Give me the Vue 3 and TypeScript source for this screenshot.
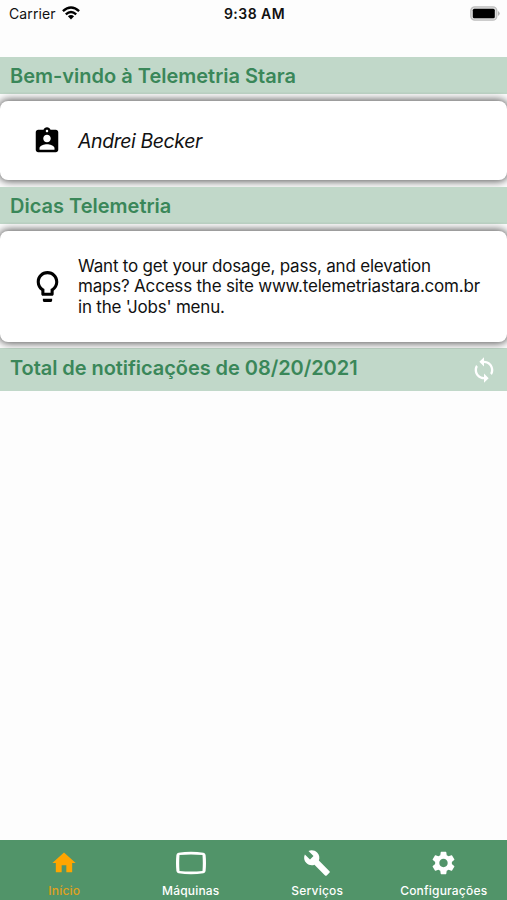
<script setup lang="ts">
interface Tab {
  label: string
  icon: string
  size: number
  active?: boolean
}

const tabs: Tab[] = [
  { label: 'Início', icon: 'M10 20v-6h4v6h5v-8h3L12 3 2 12h3v8z', size: 28, active: true },
  {
    label: 'Máquinas',
    icon: 'M2.5 1.800Q15 -.2 27.500 1.800Q29.300 2.100 29.600 4Q30.400 12 29.600 20Q29.300 21.900 27.500 22.200Q15 24.200 2.500 22.200Q.7 21.900 .4 20Q-.4 12 .4 4Q.7 2.100 2.500 1.800ZM3.500 3.900Q2.900 12 3.500 20.100Q15 21.100 26.500 20.100Q27.100 12 26.500 3.900Q15 2.900 3.500 3.900Z',
    size: 30,
  },
  {
    label: 'Serviços',
    icon: 'M22.700 19l-9.100-9.100c.9-2.300.4-5-1.500-6.900-2-2-5-2.400-7.400-1.300L9 6 6 9 1.600 4.700C.4 7.100.9 10.100 2.900 12.100c1.900 1.900 4.600 2.400 6.900 1.500l9.100 9.100c.4.4 1 .4 1.400 0l2.300-2.300c.5-.4.5-1.100.1-1.400z',
    size: 28,
  },
  {
    label: 'Configurações',
    icon: 'M19.140 12.940c.04-.3.06-.61.06-.94 0-.32-.02-.64-.07-.94l2.030-1.580c.18-.14.23-.41.12-.61l-1.920-3.320c-.12-.22-.37-.29-.59-.22l-2.390.96c-.5-.38-1.030-.7-1.620-.94l-.36-2.540c-.04-.24-.24-.41-.48-.41h-3.840c-.24 0-.43.17-.47.41l-.36 2.540c-.59.24-1.130.57-1.620.94l-2.390-.96c-.22-.08-.47 0-.59.22L2.740 8.870c-.12.21-.08.47.12.61l2.030 1.580c-.05.3-.09.63-.09.94s.02.64.07.94l-2.030 1.580c-.18.14-.23.41-.12.61l1.920 3.320c.12.22.37.29.59.22l2.390-.96c.5.38 1.030.7 1.620.94l.36 2.540c.05.24.24.41.48.41h3.840c.24 0 .44-.17.47-.41l.36-2.540c.59-.24 1.130-.56 1.620-.94l2.390.96c.22.08.47 0 .59-.22l1.920-3.320c.12-.22.07-.47-.12-.61l-2.010-1.580zM12 15.600c-2 0-3.600-1.600-3.600-3.600s1.600-3.600 3.600-3.600 3.600 1.600 3.600 3.600-1.600 3.600-3.600 3.600z',
    size: 29,
  },
]
</script>

<template>
  <div class="screen">
    <header class="status">
      <div class="carrier">
        <span>Carrier</span>
        <svg width="18" height="14" viewBox="0 0 18 14">
          <g fill="none" stroke="#000" stroke-width="2.400">
            <path d="M.9 5.200Q9-2 17.100 5.200" />
            <path d="M3.800 8.300Q9 3.700 14.200 8.300" />
          </g>
          <path d="M5.900 10.300Q9 7.600 12.100 10.300L9 13.600Z" />
        </svg>
      </div>
      <span class="clock">9:38 AM</span>
      <svg class="battery" width="30" height="15" viewBox="0 0 30 15">
        <rect x=".8" y=".8" width="26" height="13.400" rx="4" fill="#dedede" stroke="#bebebe" stroke-width="1.300" />
        <rect x="2.800" y="2.800" width="22" height="9.400" rx="1.500" />
        <path d="M28 5Q31.500 7.500 28 10Z" fill="#b4b4b4" />
      </svg>
    </header>

    <main class="content">
      <h2 class="bar welcome"><span>Bem-vindo à Telemetria Stara</span></h2>
      <section class="card user">
        <svg class="user-icon" viewBox="0 0 24 24">
          <path d="M19 3h-4.180C14.400 1.840 13.300 1 12 1c-1.300 0-2.400.84-2.820 2H5c-1.100 0-2 .9-2 2v14c0 1.100.9 2 2 2h14c1.100 0 2-.9 2-2V5c0-1.100-.9-2-2-2zm-7 0c.55 0 1 .45 1 1s-.45 1-1 1-1-.45-1-1 .45-1 1-1zm0 4c1.660 0 3 1.340 3 3s-1.340 3-3 3-3-1.340-3-3 1.340-3 3-3zm6 12H6v-1.400c0-2 4-3.100 6-3.100s6 1.100 6 3.100V19z" />
        </svg>
        <span class="name">Andrei Becker</span>
      </section>
      <h2 class="bar tips"><span>Dicas Telemetria</span></h2>
      <section class="card tip">
        <svg class="bulb-icon" viewBox="0 0 24 24">
          <path d="M9 21c0 .5.4 1 1 1h4c.6 0 1-.5 1-1v-1H9v1zm3-19C8.100 2 5 5.100 5 9c0 2.400 1.200 4.500 3 5.700V17c0 .5.4 1 1 1h6c.6 0 1-.5 1-1v-2.300c1.800-1.300 3-3.400 3-5.700 0-3.900-3.100-7-7-7zm2.900 11.100l-.9.6V16h-4v-2.300l-.8-.6C7.800 12.200 7 10.600 7 9c0-2.800 2.200-5 5-5s5 2.200 5 5c0 1.600-.8 3.200-2.100 4.100z" />
        </svg>
        <p class="tip-text">
          Want to get your dosage, pass, and elevation<br />
          maps? Access the site www.telemetriastara.com.br<br />
          in the 'Jobs' menu.
        </p>
      </section>
      <h2 class="bar total">
        <span>Total de notificações de 08/20/2021</span>
        <svg width="28" height="28" viewBox="0 0 24 24" fill="#fff">
          <path d="M12 4V1L8 5l4 4V6c3.310 0 6 2.690 6 6 0 1.010-.25 1.970-.7 2.800l1.460 1.460C19.540 15.030 20 13.570 20 12c0-4.420-3.580-8-8-8zm0 14c-3.310 0-6-2.690-6-6 0-1.010.25-1.970.7-2.800L5.240 7.740C4.460 8.970 4 10.430 4 12c0 4.420 3.580 8 8 8v3l4-4-4-4v3z" />
        </svg>
      </h2>
    </main>

    <nav class="tabs">
      <div v-for="tab in tabs" :key="tab.label" class="tab" :class="{ active: tab.active }">
        <svg :width="tab.size" height="28" :viewBox="tab.size === 30 ? '0 -2 30 28' : '0 0 24 24'">
          <path :d="tab.icon" fill="currentColor" fill-rule="evenodd" />
        </svg>
        <span>{{ tab.label }}</span>
      </div>
    </nav>
  </div>
</template>

<style>
body {
  margin: 0;
}
</style>

<style scoped>
.screen {
  display: flex;
  flex-direction: column;
  height: 900px;
  overflow: hidden;
  background: #fdfdfd;
  color: #111;
  font-family: Inter, "Liberation Sans", sans-serif;
}
.status {
  display: grid;
  grid-template-columns: 1fr auto 1fr;
  align-items: center;
  height: 27px;
  margin-bottom: 30px;
  padding: 0 7px 0 9px;
  font-size: 14px;
}
.carrier {
  display: flex;
  align-items: center;
  gap: 6px;
  letter-spacing: 0.1px;
}
.carrier svg {
  margin-top: -2px;
}
.clock {
  font-weight: 600;
  letter-spacing: 0.45px;
}
.battery {
  justify-self: end;
}
.bar {
  display: flex;
  align-items: center;
  box-sizing: border-box;
  height: 37px;
  margin: 0;
  padding: 0 9px 0 10px;
  background: #c1d8c9;
  color: #3a8759;
  font-size: 20px;
  font-weight: 600;
  white-space: nowrap;
}
.total {
  height: 43px;
  justify-content: space-between;
  letter-spacing: -0.06px;
}
.total span {
  padding-bottom: 3px;
}
.card {
  display: flex;
  align-items: center;
  box-sizing: border-box;
  margin: 7px 0;
  padding-left: 29px;
  border-radius: 8px;
  background: #fff;
  box-shadow: 0 0 9px 1px rgba(0, 0, 0, 0.7);
  clip-path: inset(-9px 0 -7px);
}
.user {
  height: 79px;
}
.user-icon {
  width: 30px;
  height: 30px;
  margin: 0 16px 0 3px;
}
.name {
  font-size: 19.5px;
  font-style: italic;
  letter-spacing: -0.42px;
}
.tip {
  height: 111px;
  margin-bottom: 6px;
}
.bulb-icon {
  width: 37px;
  height: 37px;
  margin-right: 12px;
}
.tip-text {
  margin: 0;
  font-size: 17px;
  line-height: 20.500px;
  letter-spacing: -0.2px;
  white-space: nowrap;
}
.tabs {
  display: grid;
  grid-template-columns: repeat(4, 1fr);
  height: 60px;
  margin-top: auto;
  padding-left: 1px;
  background: #519469;
  color: #fff;
}
.tab {
  display: flex;
  flex-direction: column;
  align-items: center;
  padding-top: 9px;
  font-size: 12px;
  font-weight: 500;
  line-height: 16px;
  letter-spacing: 0.2px;
  gap: 6px;
}
.active {
  color: #ffa500;
}
.active span {
  color: #e0a11c;
}
</style>
